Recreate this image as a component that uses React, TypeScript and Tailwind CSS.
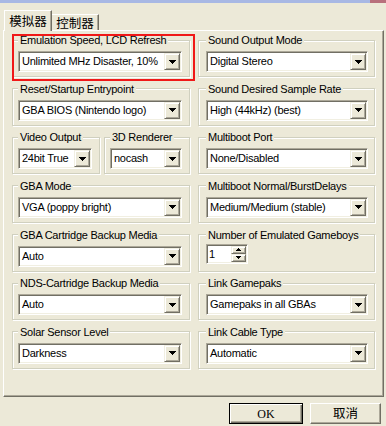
import React from "react";

const Arrow = () => (
  <svg width="7" height="4" viewBox="0 0 7 4" shapeRendering="crispEdges">
    <path d="M0 0H7V1H6V2H5V3H4V4H3V3H2V2H1V1H0Z" fill="#000" />
  </svg>
);

const SmallArrow = ({ up }: { up?: boolean }) => (
  <svg width="5" height="3" viewBox="0 0 5 3" shapeRendering="crispEdges">
    {up ? (
      <path d="M2 0H3V1H4V2H5V3H0V2H1V1H2Z" fill="#000" />
    ) : (
      <path d="M0 0H5V1H4V2H3V3H2V2H1V1H0Z" fill="#000" />
    )}
  </svg>
);

function DropButton() {
  return (
    <div className="flex h-[17px] w-[16px] shrink-0 items-center justify-center border border-t-[#f1efe2] border-l-[#f1efe2] border-b-[#716f64] border-r-[#716f64] bg-[#ece9d8] shadow-[inset_1px_1px_0_#ffffff,inset_-1px_-1px_0_#aca899]">
      <Arrow />
    </div>
  );
}

function Combo({ value }: { value: string }) {
  return (
    <div className="flex h-[21px] w-full items-center border border-t-[#aca899] border-l-[#aca899] border-b-white border-r-white bg-white p-[1px] shadow-[inset_1px_1px_0_#716f64,inset_-1px_-1px_0_#f1efe2]">
      <span className="flex-1 overflow-hidden whitespace-nowrap pl-[2px] leading-[17px]">{value}</span>
      <DropButton />
    </div>
  );
}

function Spin() {
  return (
    <div className="-mt-[2px] flex h-[20px] w-[42px] border border-t-[#aca899] border-l-[#aca899] border-b-white border-r-white bg-white p-[1px] shadow-[inset_1px_1px_0_#716f64,inset_-1px_-1px_0_#f1efe2]">
      <span className="flex-1 pl-[1px] leading-[16px]">1</span>
      <div className="flex w-[15px] flex-col">
        <div className="flex flex-1 items-center justify-center border border-t-[#f1efe2] border-l-[#f1efe2] border-b-[#716f64] border-r-[#716f64] bg-[#ece9d8] shadow-[inset_1px_1px_0_#ffffff,inset_-1px_-1px_0_#aca899]">
          <SmallArrow up />
        </div>
        <div className="flex flex-1 items-center justify-center border border-t-[#f1efe2] border-l-[#f1efe2] border-b-[#716f64] border-r-[#716f64] bg-[#ece9d8] shadow-[inset_1px_1px_0_#ffffff,inset_-1px_-1px_0_#aca899]">
          <SmallArrow />
        </div>
      </div>
    </div>
  );
}

function Group({
  title,
  children,
  className = "",
}: {
  title: string;
  children: React.ReactNode;
  className?: string;
}) {
  return (
    <fieldset
      className={
        "h-[43px] min-w-0 border border-[#d0d0bf] pt-[5px] shadow-[inset_1px_1px_0_#ffffff,1px_1px_0_#ffffff] " +
        className
      }
    >
      <legend className="bg-[#ece9d8] px-[2px] leading-[12px] whitespace-nowrap">{title}</legend>
      {children}
    </fieldset>
  );
}

export default function App() {
  const L = "pl-[5px] pr-[7px]";
  const R = "pl-[7px] pr-[6px]";
  return (
    <div className="relative h-[426px] w-[386px] overflow-hidden bg-[#ece9d8] font-['Liberation_Sans',sans-serif] text-[11px] tracking-[-0.25px] text-black">
      <div className="flex h-[3px]">
        <div className="flex-1 bg-[#a8b8e4]" />
        <div className="w-[16px] bg-[#b8707c]" />
      </div>

      <div className="mt-[7px] flex h-[20px] items-end pl-[4px] font-['Noto_Sans_CJK_SC',sans-serif] text-[12.5px] tracking-normal">
        <div className="relative z-10 -mb-px flex h-[21px] w-[48px] items-center justify-center border-t border-l border-r border-t-white border-l-white border-r-[#716f64] bg-[#ece9d8] pb-[1px] leading-[14px] shadow-[inset_-1px_0_0_#aca899]">
          模拟器
        </div>
        <div className="flex h-[16px] w-[47px] items-center justify-center border-t border-r border-t-white border-r-[#716f64] pt-[1px] leading-[14px] shadow-[inset_-1px_0_0_#aca899]">
          控制器
        </div>
      </div>

      <div className="ml-[3px] flex h-[367px] w-[381px] gap-[8px] border border-t-white border-l-white border-b-[#716f64] border-r-[#716f64] pl-[8px] pr-[8px] pt-[3px] shadow-[inset_-1px_-1px_0_#aca899]">
        <div className="flex w-[178px] flex-col gap-[5.67px]">
          <Group title="Emulation Speed, LCD Refresh" className={L}>
            <Combo value="Unlimited MHz Disaster, 10%" />
          </Group>
          <Group title="Reset/Startup Entrypoint" className={L}>
            <Combo value="GBA BIOS (Nintendo logo)" />
          </Group>
          <div className="flex gap-[4px]">
            <Group title="Video Output" className={"w-[88px] " + L}>
              <Combo value="24bit True" />
            </Group>
            <Group title="3D Renderer" className={"flex-1 " + L}>
              <Combo value="nocash" />
            </Group>
          </div>
          <Group title="GBA Mode" className={L}>
            <Combo value="VGA (poppy bright)" />
          </Group>
          <Group title="GBA Cartridge Backup Media" className={L}>
            <Combo value="Auto" />
          </Group>
          <Group title="NDS-Cartridge Backup Media" className={L}>
            <Combo value="Auto" />
          </Group>
          <Group title="Solar Sensor Level" className={L}>
            <Combo value="Darkness" />
          </Group>
        </div>

        <div className="flex w-[177px] flex-col gap-[5.67px]">
          <Group title="Sound Output Mode" className={R}>
            <Combo value="Digital Stereo" />
          </Group>
          <Group title="Sound Desired Sample Rate" className={R}>
            <Combo value="High (44kHz) (best)" />
          </Group>
          <Group title="Multiboot Port" className={R}>
            <Combo value="None/Disabled" />
          </Group>
          <Group title="Multiboot Normal/BurstDelays" className={R}>
            <Combo value="Medium/Medium (stable)" />
          </Group>
          <Group title="Number of Emulated Gameboys" className={R}>
            <Spin />
          </Group>
          <Group title="Link Gamepaks" className={R}>
            <Combo value="Gamepaks in all GBAs" />
          </Group>
          <Group title="Link Cable Type" className={R}>
            <Combo value="Automatic" />
          </Group>
        </div>
      </div>

      <div className="mt-[6px] flex justify-end gap-[7px] pr-[5px] tracking-normal">
        <button className="flex h-[21px] w-[74px] items-center justify-center border border-black bg-[#ece9d8] font-['Liberation_Serif',serif] text-[12px] shadow-[inset_1px_1px_0_#ffffff,inset_-1px_-1px_0_#716f64,inset_-2px_-2px_0_#aca899]">
          OK
        </button>
        <button className="flex h-[21px] w-[71px] items-center justify-center border border-t-white border-l-white border-b-[#716f64] border-r-[#716f64] bg-[#ece9d8] font-['Noto_Sans_CJK_SC',sans-serif] text-[12.5px] shadow-[inset_-1px_-1px_0_#aca899]">
          取消
        </button>
      </div>

      <div className="pointer-events-none absolute left-[12px] top-[34px] h-[47px] w-[183px] border-2 border-[#f01818]" />
    </div>
  );
}
